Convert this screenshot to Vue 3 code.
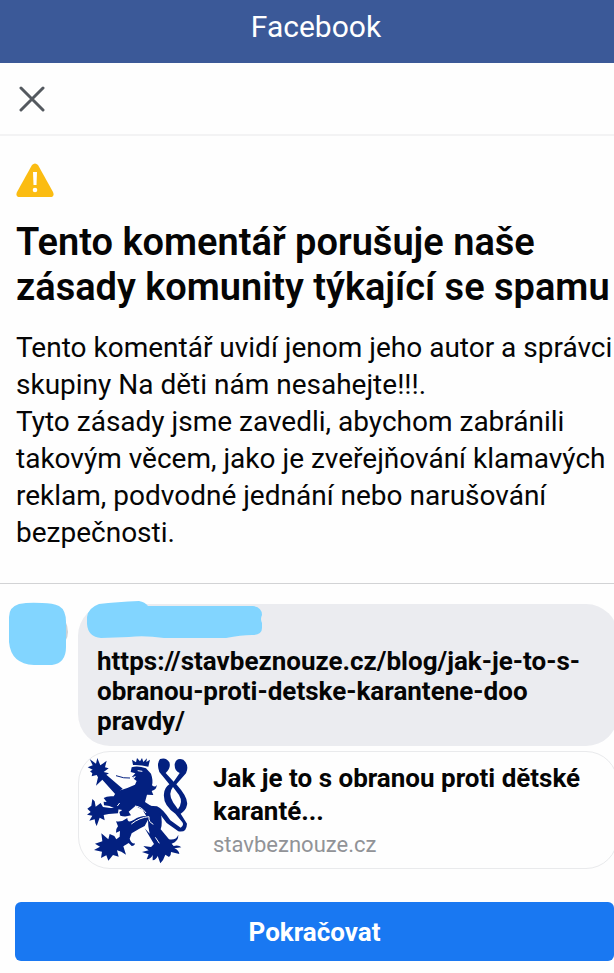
<script setup>
    import { ref } from 'vue'

    const closed = ref(false)
    const url = 'https://stavbeznouze.cz/blog/jak-je-to-s-obranou-proti-detske-karantene-doo'
    const lines = ['https://stavbeznouze.cz/blog/jak-je-to-s-', 'obranou-proti-detske-karantene-doo', 'pravdy/']

    const close = () => {
        closed.value = true
    }
</script>

<template>
    <header class="app-bar">Facebook</header>
    <main v-if="!closed">
        <div class="toolbar">
            <button class="close" type="button" aria-label="Zavřít" @click="close">
                <svg width="26" height="26" viewBox="0 0 26 26">
                    <path d="M2 2L24 24M24 2L2 24" fill="none" stroke="#54595f" stroke-width="3" stroke-linecap="round" />
                </svg>
            </button>
        </div>
        <section class="notice">
            <svg class="warning" width="38" height="34" viewBox="0 0 38 34">
                <path d="M16 2Q19-1 22 2L37 29Q39 34 34 34H4Q-1 34 1 29Z" fill="#fbbc12" />
                <path d="M17 9H21L20.500 22H17.500Z" fill="#fff" />
                <circle cx="19" cy="27" r="2.300" fill="#fff" />
            </svg>
            <h1>Tento komentář porušuje naše zásady komunity týkající se spamu</h1>
            <p>Tento komentář uvidí jenom jeho autor a správci skupiny Na děti nám nesahejte!!!.</p>
            <p>Tyto zásady jsme zavedli, abychom zabránili takovým věcem, jako je zveřejňování klamavých reklam, podvodné jednání nebo narušování bezpečnosti.</p>
        </section>
        <section class="comment">
            <svg class="avatar" width="60" height="64" viewBox="0 0 60 64">
                <path d="M56 18Q62 31 56 40Z" fill="#ccd2d6" />
                <path d="M10 2Q20 0 33 1Q44 1 50 4Q57 8 57 20V45Q57 61 43 63H25Q2 62 0 40V15Q0 5 10 2Z" fill="#82d5ff" />
            </svg>
            <div class="thread">
                <div class="bubble">
                    <svg class="author" width="176" height="38" viewBox="0 0 176 38">
                        <path d="M12 3Q30 1 52 0Q58 1 61 5H166Q175 6 175 14Q173 18 175 22V27Q175 34 165 34Q154 34 139 37H77Q57 34 42 36L14 37Q1 36 0 23V16Q1 7 12 3Z" fill="#82d5ff" />
                    </svg>
                    <a :href="url"><span v-for="line in lines" :key="line">{{ line }}</span></a>
                </div>
                <a class="preview" :href="url">
                    <svg width="104" height="108" viewBox="53 32 312 324">
                        <g fill="#032080">
                            <!-- raised front leg -->
                            <path d="M160 130L111 88L119 84L103 80L118 69L107 66L112 46L102 54L93 60L84 38L80 55L61 41L70 60L55 66L70 73L62 78L69 84L67 93L82 89L86 96L80 121L99 103L138 147Z" />
                            <!-- head, body and right hind leg -->
                            <path d="M187 66Q205 60 230 69L245 85Q252 105 248 120Q258 128 262 118Q263 132 247 137L252 149L233 148L227 170Q253 188 273 194Q281 238 274 252L299 282Q320 286 327 268Q328 288 307 295L313 302Q328 298 336 306L315 309Q329 315 330 326L305 320Q306 329 299 335L288 328Q283 344 273 354L265 332Q260 344 250 345V329Q245 341 232 342L238 327L218 320L238 315Q230 310 222 302L245 305L254 296L226 249L241 265L237 243L236 222L220 193L198 182L178 199L185 210Q168 216 153 211L150 200L159 194Q137 192 120 182L104 180L103 169L112 170L103 158Q113 151 133 153Q141 137 153 135Q178 127 197 118L202 107L187 96L198 84L184 80Z" />
                            <!-- lower front leg -->
                            <path d="M148 188L123 188L101 185L94 173L79 184L76 168L69 161L66 181L54 190L64 200L53 208L69 211L60 226L76 222Q77 235 82 242L91 217L106 225L103 209L118 206L146 204Z" />
                            <!-- left hind leg -->
                            <path d="M241 214Q218 207 194 223Q174 236 174 218Q158 231 140 228L146 243Q138 252 140 262L152 257L151 274L141 282L135 272L121 266L117 282L96 264L99 288L77 295L92 304L74 314L98 319L95 338L111 330L117 346L131 329L148 334L143 315L156 319L170 328L162 303L178 293L187 302Q196 302 197 294Q186 296 181 280L187 264L210 250L226 242Z" />
                            <!-- crown -->
                            <path d="M191 59L188 43L200 51L203 38L212 48L218 38L222 50L233 39L231 50L242 43L237 64Q215 58 191 59Z" />
                            <!-- forked tail -->
                            <path d="M272 41Q291 35 300 51Q306 67 289 83L313 109L331 83Q315 77 316 57Q320 36 342 43Q361 60 350 84L321 117Q358 158 353 179Q350 195 334 205L353 235Q352 263 327 258L292 233L265 197L239 181L263 183Q280 190 303 225L334 247Q345 239 339 231L318 205Q280 180 284 145Q286 126 300 117L270 80Q261 55 272 41Z" />
                        </g>
                        <path d="M311 125Q294 145 312 172L326 192Q342 170 329 149Z" fill="#fff" />
                        <path d="M182 99L198 94L188 105M205 76L219 78M144 182L151 173M197 182Q217 184 230 203M186 236Q211 216 239 214Q237 230 252 237M258 276L270 294" fill="none" stroke="#fff" stroke-width="3" />
                        <path d="M140 91Q165 100 182 98" fill="none" stroke="#032080" stroke-width="3" />
                    </svg>
                    <div>
                        <strong>Jak je to s obranou proti dětské karanté...</strong>
                        <small>stavbeznouze.cz</small>
                    </div>
                </a>
            </div>
        </section>
        <div class="actions">
            <button class="continue" type="button" @click="close">Pokračovat</button>
        </div>
    </main>
</template>

<style>
    body {
        background: #fefefe;
        overflow-x: hidden;
    }
</style>

<style scoped>
    .app-bar {
        height: 63px;
        box-sizing: border-box;
        padding: 9px 0 0 18px;
        background: #3b5998;
        color: #fff;
        font: 30px/36px Roboto, sans-serif;
        text-align: center;
    }

    main {
        font-family: Roboto, sans-serif;
        color: #050505;
    }

    .toolbar {
        display: flex;
        align-items: center;
        height: 71px;
        padding-left: 19px;
        border-bottom: 2px solid #f3f3f4;
    }

    .close {
        display: flex;
        padding: 0;
        border: 0;
        background: none;
    }

    .notice {
        padding: 27px 0 32px 16px;
        border-bottom: 1px solid #d2d3d5;
    }

    .warning {
        display: block;
    }

    h1 {
        margin: 23px 0 19px;
        font-size: 38px;
        line-height: 45px;
        font-weight: 600;
    }

    p {
        margin: 0;
        font-size: 28px;
        line-height: 37px;
    }

    .comment {
        display: flex;
        align-items: flex-start;
        gap: 9px;
        padding: 18px 0 0 9px;
    }

    .avatar {
        flex: none;
    }

    .thread {
        flex: 1;
        min-width: 0;
        margin-right: -4px;
    }

    .bubble {
        display: flow-root;
        margin-top: 2px;
        padding: 0 19px 10px;
        border-radius: 32px;
        background: #ebecf0;
    }

    .author {
        display: block;
        margin: -3px 0 7px -10px;
    }

    .bubble a {
        color: #050505;
        font-size: 26px;
        font-weight: 700;
        line-height: 30px;
        text-decoration: none;
    }

    .bubble span {
        display: block;
    }

    .preview {
        display: flex;
        gap: 22px;
        padding: 4px 18px 4px 8px;
        margin-top: 5px;
        border: 1px solid #e9eaec;
        border-radius: 32px;
        color: #050505;
        text-decoration: none;
    }

    .preview svg {
        flex: none;
    }

    .preview strong,
    .preview small {
        display: block;
    }

    .preview strong {
        padding-top: 6px;
        font-size: 26px;
        line-height: 33px;
        font-weight: 700;
    }

    .preview small {
        color: #919397;
        font-size: 22px;
        line-height: 34px;
    }

    .actions {
        padding: 33px 0 12px 15px;
    }

    .continue {
        display: block;
        width: 100%;
        height: 59px;
        border: 0;
        border-radius: 6px;
        background: #1978f2;
        color: #fff;
        font: 700 26px/30px Roboto, sans-serif;
    }
</style>
